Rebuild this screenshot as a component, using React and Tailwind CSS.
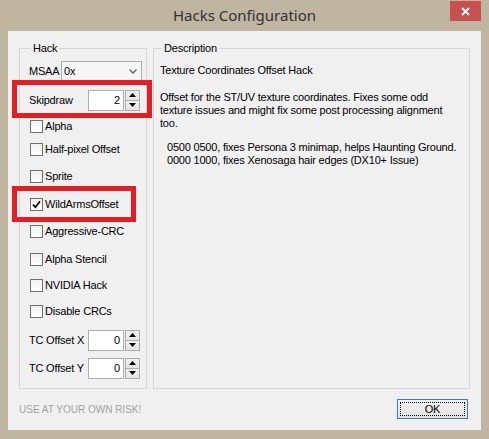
import React from 'react';

// Win8-style "Hacks Configuration" dialog

function Check({ label, checked, className = '' }) {
  return (
    <div className={`flex items-center h-[13px] ml-[1px] ${className}`}>
      <span className="w-[13px] h-[13px] shrink-0 border border-[#707070] bg-linear-to-b from-[#f0f0f0] to-white flex items-center justify-center">
        {checked && (
          <svg width="9" height="9" viewBox="0 0 9 9">
            <path d="M1 4.6 L3.4 7.2 L8 1.2" fill="none" stroke="#000" strokeWidth="1.7" />
          </svg>
        )}
      </span>
      <span className="ml-[2px] leading-[13px] whitespace-nowrap">{label}</span>
    </div>
  );
}

function Arrow({ up }) {
  return (
    <svg width="7" height="4" viewBox="0 0 7 4">
      <polygon points={up ? '3.5,0 7,4 0,4' : '0,0 7,0 3.5,4'} fill="#000" />
    </svg>
  );
}

function Spin({ label, value, className = '' }) {
  return (
    <div className={`flex items-center h-[21px] ${className}`}>
      <span className="w-[59px] whitespace-nowrap">{label}</span>
      <div className="w-[36px] h-full border border-[#abadb3] bg-white flex items-center justify-end pr-[3px]">
        {value}
      </div>
      <div className="ml-[1px] w-[15px] h-full flex flex-col">
        <div className="h-1/2 border border-[#acacac] bg-linear-to-b from-[#f2f2f2] to-[#e4e4e4] flex items-center justify-center">
          <Arrow up />
        </div>
        <div className="h-1/2 border border-t-0 border-[#acacac] bg-linear-to-b from-[#f2f2f2] to-[#e4e4e4] flex items-center justify-center">
          <Arrow />
        </div>
      </div>
    </div>
  );
}

function Legend({ children }) {
  return (
    <div className="-mt-[7px] ml-[5px] px-[2px] h-[13px] leading-[13px] w-fit bg-[#f0f0f0]">{children}</div>
  );
}

export default function App() {
  return (
    <div className="w-[489px] h-[439px] bg-[#bfb5a1] flex flex-col font-['Liberation_Sans',Arial,sans-serif] text-[11px] tracking-[-0.2px] text-black">
      {/* title bar */}
      <div className="h-[31px] flex shrink-0">
        <div className="w-[39px]" />
        <div className="flex-1 text-center text-[15px] tracking-normal leading-[31px] text-[#333] font-['Noto_Sans',sans-serif]">
          Hacks Configuration
        </div>
        <div className="w-[31px] h-[20px] mt-[1px] bg-[#c75050] flex items-center justify-center">
          <svg width="9" height="9" viewBox="0 0 9 9">
            <path d="M1 1 L8 8 M8 1 L1 8" stroke="#fff" strokeWidth="1.8" />
          </svg>
        </div>
        <div className="w-[8px]" />
      </div>

      {/* client area */}
      <div className="mx-[8px] h-[399px] bg-[#f0f0f0] pl-[11px] pr-[11px] pt-[17px] flex flex-col">
        <div className="flex h-[341px] gap-[6px]">
          {/* Hack group */}
          <div className="w-[128px] border border-[#d5d5d5] flex flex-col pl-[9px] pr-[4px]">
            <div className="-ml-[3px]">
              <Legend>Hack</Legend>
            </div>
            <div className="flex items-center mt-[6px] h-[21px]">
              <span className="w-[32px]">MSAA</span>
              <div className="flex-1 h-full border border-[#acacac] bg-[#f6f6f6] flex items-center pl-[2px]">
                <span className="flex-1">0x</span>
                <svg width="8" height="5" viewBox="0 0 8 5" className="mr-[4px]">
                  <path d="M0.5 0.5 L4 4 L7.5 0.5" fill="none" stroke="#6a6a6a" strokeWidth="1.5" />
                </svg>
              </div>
            </div>
            <div className="relative mt-[8px]">
              <Spin label="Skipdraw" value="2" />
              <span className="absolute -left-[17px] -right-[10px] -top-[10px] -bottom-[7px] border-[5px] border-[#e21e26]" />
            </div>
            <Check label="Alpha" className="mt-[9px]" />
            <Check label="Half-pixel Offset" className="mt-[10px]" />
            <Check label="Sprite" className="mt-[14px]" />
            <div className="relative mt-[15px]">
              <Check label="WildArmsOffset" checked />
              <span className="absolute -left-[17px] right-[6px] -top-[12px] -bottom-[11px] border-[5px] border-[#e21e26]" />
            </div>
            <Check label="Aggressive-CRC" className="mt-[14px]" />
            <Check label="Alpha Stencil" className="mt-[15px]" />
            <Check label="NVIDIA Hack" className="mt-[13px]" />
            <Check label="Disable CRCs" className="mt-[13px]" />
            <Spin label="TC Offset X" value="0" className="mt-[12px]" />
            <Spin label="TC Offset Y" value="0" className="mt-[7px]" />
          </div>

          {/* Description group */}
          <div className="flex-1 border border-[#d5d5d5] flex flex-col pl-[6px]">
            <div className="-ml-[3px]">
              <Legend>Description</Legend>
            </div>
            <div className="mt-[9px] leading-[13px] whitespace-nowrap">Texture Coordinates Offset Hack</div>
            <div className="mt-[14px] leading-[13px] whitespace-nowrap">
              Offset for the ST/UV texture coordinates. Fixes some odd
              <br />
              texture issues and might fix some post processing alignment
              <br />
              too.
            </div>
            <div className="mt-[11px] pl-[7px] leading-[13px] whitespace-nowrap">
              0500 0500, fixes Persona 3 minimap, helps Haunting Ground.
              <br />
              0000 1000, fixes Xenosaga hair edges (DX10+ Issue)
            </div>
          </div>
        </div>

        {/* bottom row */}
        <div className="mt-[10px] flex items-center justify-between pr-[2px]">
          <span className="text-[#a3a3a3] text-[10px] tracking-normal">USE AT YOUR OWN RISK!</span>
          <button className="w-[71px] h-[20px] border border-[#3c7fb1] bg-linear-to-b from-[#f2f2f2] to-[#e3e3e3] p-[2px]">
            <div className="w-full h-full border border-dotted border-black flex items-center justify-center text-[11px]">
              OK
            </div>
          </button>
        </div>
      </div>
    </div>
  );
}
